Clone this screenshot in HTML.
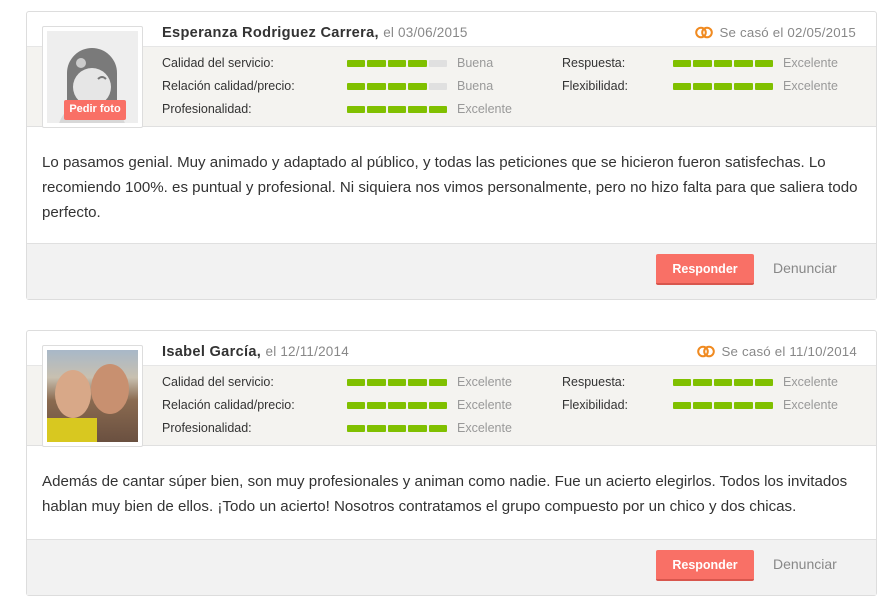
<!DOCTYPE html>
<html><head><style>
body{margin:0;width:896px;height:609px;background:#fff;font-family:"Liberation Sans",sans-serif;position:relative;overflow:hidden}
.card{position:absolute;left:26px;width:849px;border:1px solid #ddd;border-radius:3px;background:#fff}
.band{position:absolute;left:0;right:0;background:#f4f3f0;border-top:1px solid #e6e6e6;border-bottom:1px solid #e0e0e0}
.av{position:absolute;left:15px;width:99px;height:100px;border:1px solid #ddd;background:#fff;border-radius:2px}
.name{position:absolute;left:135px;font-size:14.6px;color:#333;font-weight:bold;letter-spacing:.3px}
.name span{font-weight:normal;color:#888;font-size:13.5px;letter-spacing:.2px}
.cas{position:absolute;right:20px;font-size:13.3px;color:#888;letter-spacing:.2px}
.cas svg{vertical-align:-2px;margin-right:6px}
.row{position:absolute;font-size:12.5px;color:#333}
.bars{position:absolute;display:flex;gap:2px}
.bars i{display:block;width:18.4px;height:7px;background:#80c000;border-radius:1px}
.bars i.e{background:#e0e0e0}
.rt{position:absolute;font-size:12.5px;color:#999}
.txt{position:absolute;left:15px;right:12px;font-size:15.1px;line-height:25px;color:#333}
.foot{position:absolute;left:0;right:0;bottom:0;height:55px;background:#f2f2f2;border-top:1px solid #e0e0e0}
.btn{position:absolute;left:629px;top:10px;width:98px;height:31px;background:#f97066;border-bottom:2px solid #d8564d;border-radius:2px;color:#fff;font-weight:bold;font-size:12.5px;text-align:center;line-height:31px;box-sizing:border-box}
.den{position:absolute;left:746px;top:16px;font-size:14px;color:#888}
</style></head><body>

<div class="card" style="top:11px;height:287px">
 <div class="band" style="top:34px;height:79px"></div>
 <div class="av" style="top:14px">
  <div style="position:absolute;left:4px;top:4px;width:91px;height:92px;background:#eee;overflow:hidden">
   <svg width="91" height="92" viewBox="0 0 91 92">
    <ellipse cx="45" cy="100" rx="34" ry="30" fill="#d8d8d8"/>
    <path d="M20 82 V42 a25 25 0 0 1 50 0 V82 Z" fill="#7a7a7a"/>
    <circle cx="45" cy="56" r="19" fill="#e6e6e6"/>
    <path d="M25 52 C30 38 45 30 64 44 L66 34 a21 21 0 0 0 -41 0Z" fill="#7a7a7a"/>
    <circle cx="34" cy="32" r="5" fill="#ccc"/>
    <path d="M51 48 q4 -4 8 0" stroke="#777" stroke-width="2" fill="none"/>
   </svg>
  </div>
  <div style="position:absolute;left:21px;top:73px;width:62px;height:20px;background:#f97066;border-radius:2px;color:#fff;font-weight:bold;font-size:11px;text-align:center;line-height:18px">Pedir foto</div>
 </div>
 <div class="name" style="top:13px">Esperanza Rodriguez Carrera, <span>el 03/06/2015</span></div>
 <div class="cas" style="top:13px"><svg width="18" height="13" viewBox="0 0 18 13"><circle cx="6" cy="6.5" r="4.8" fill="none" stroke="#f08a20" stroke-width="2"/><circle cx="12" cy="6.5" r="4.8" fill="none" stroke="#f08a20" stroke-width="2"/></svg>Se casó el 02/05/2015</div>
 <div class="row" style="left:135px;top:44px">Calidad del servicio:</div>
 <div class="bars" style="left:320px;top:48px"><i></i><i></i><i></i><i></i><i class="e"></i></div>
 <div class="rt" style="left:430px;top:44px">Buena</div>
 <div class="row" style="left:135px;top:67px">Relación calidad/precio:</div>
 <div class="bars" style="left:320px;top:71px"><i></i><i></i><i></i><i></i><i class="e"></i></div>
 <div class="rt" style="left:430px;top:67px">Buena</div>
 <div class="row" style="left:135px;top:90px">Profesionalidad:</div>
 <div class="bars" style="left:320px;top:94px"><i></i><i></i><i></i><i></i><i></i></div>
 <div class="rt" style="left:430px;top:90px">Excelente</div>
 <div class="row" style="left:535px;top:44px">Respuesta:</div>
 <div class="bars" style="left:646px;top:48px"><i></i><i></i><i></i><i></i><i></i></div>
 <div class="rt" style="left:756px;top:44px">Excelente</div>
 <div class="row" style="left:535px;top:67px">Flexibilidad:</div>
 <div class="bars" style="left:646px;top:71px"><i></i><i></i><i></i><i></i><i></i></div>
 <div class="rt" style="left:756px;top:67px">Excelente</div>
 <div class="txt" style="top:138px">Lo pasamos genial. Muy animado y adaptado al público, y todas las peticiones que se hicieron fueron satisfechas. Lo recomiendo 100%. es puntual y profesional. Ni siquiera nos vimos personalmente, pero no hizo falta para que saliera todo perfecto.</div>
 <div class="foot"><div class="btn">Responder</div><div class="den">Denunciar</div></div>
</div>

<div class="card" style="top:330px;height:264px">
 <div class="band" style="top:34px;height:79px"></div>
 <div class="av" style="top:14px">
  <div style="position:absolute;left:4px;top:4px;width:91px;height:92px;overflow:hidden;background:linear-gradient(180deg,#a8b8c8 0%,#c8c0b0 30%,#8a6a50 55%,#6a5040 100%)">
   <div style="position:absolute;left:8px;top:20px;width:36px;height:48px;border-radius:50%;background:#d8a888"></div>
   <div style="position:absolute;left:44px;top:14px;width:38px;height:50px;border-radius:50%;background:#c89070"></div>
   <div style="position:absolute;left:0;top:68px;width:50px;height:24px;background:#d8c820"></div>
  </div>
 </div>
 <div class="name" style="top:13px">Isabel García, <span>el 12/11/2014</span></div>
 <div class="cas" style="top:13px;right:19px"><svg width="18" height="13" viewBox="0 0 18 13"><circle cx="6" cy="6.5" r="4.8" fill="none" stroke="#f08a20" stroke-width="2"/><circle cx="12" cy="6.5" r="4.8" fill="none" stroke="#f08a20" stroke-width="2"/></svg>Se casó el 11/10/2014</div>
 <div class="row" style="left:135px;top:44px">Calidad del servicio:</div>
 <div class="bars" style="left:320px;top:48px"><i></i><i></i><i></i><i></i><i></i></div>
 <div class="rt" style="left:430px;top:44px">Excelente</div>
 <div class="row" style="left:135px;top:67px">Relación calidad/precio:</div>
 <div class="bars" style="left:320px;top:71px"><i></i><i></i><i></i><i></i><i></i></div>
 <div class="rt" style="left:430px;top:67px">Excelente</div>
 <div class="row" style="left:135px;top:90px">Profesionalidad:</div>
 <div class="bars" style="left:320px;top:94px"><i></i><i></i><i></i><i></i><i></i></div>
 <div class="rt" style="left:430px;top:90px">Excelente</div>
 <div class="row" style="left:535px;top:44px">Respuesta:</div>
 <div class="bars" style="left:646px;top:48px"><i></i><i></i><i></i><i></i><i></i></div>
 <div class="rt" style="left:756px;top:44px">Excelente</div>
 <div class="row" style="left:535px;top:67px">Flexibilidad:</div>
 <div class="bars" style="left:646px;top:71px"><i></i><i></i><i></i><i></i><i></i></div>
 <div class="rt" style="left:756px;top:67px">Excelente</div>
 <div class="txt" style="top:138px">Además de cantar súper bien, son muy profesionales y animan como nadie. Fue un acierto elegirlos. Todos los invitados hablan muy bien de ellos. ¡Todo un acierto! Nosotros contratamos el grupo compuesto por un chico y dos chicas.</div>
 <div class="foot"><div class="btn">Responder</div><div class="den">Denunciar</div></div>
</div>

</body></html>
